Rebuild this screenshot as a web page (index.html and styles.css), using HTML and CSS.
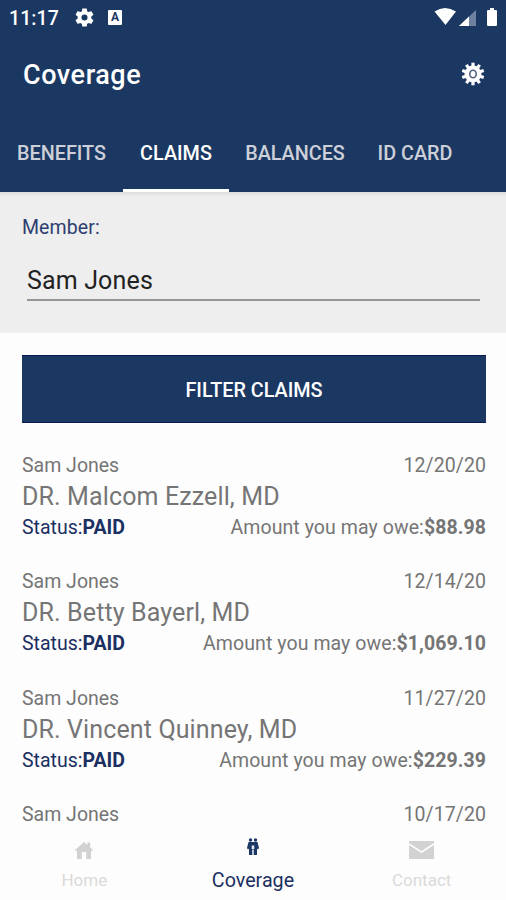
FILE: index.html
```html
<!DOCTYPE html>
<html lang="en">
<head>
<meta charset="utf-8">
<title>Coverage</title>
<link rel="stylesheet" href="styles.css">
</head>
<body>
<div class="app">
  <header class="header">
    <div class="statusbar">
      <span class="clock">11:17</span>
      <svg class="cog" width="19" height="19" viewBox="2 2 20 20"><path fill="#fff" d="M19.14 12.94c.04-.3.06-.61.06-.94 0-.32-.02-.64-.07-.94l2.03-1.58a.49.49 0 0 0 .12-.61l-1.92-3.32a.488.488 0 0 0-.59-.22l-2.39.96c-.5-.38-1.03-.7-1.62-.94l-.36-2.54a.484.484 0 0 0-.48-.41h-3.84c-.24 0-.43.17-.47.41l-.36 2.54c-.59.24-1.13.57-1.62.94l-2.39-.96a.48.48 0 0 0-.59.22L2.74 8.87c-.12.21-.08.47.12.61l2.03 1.58c-.05.3-.09.63-.09.94s.02.64.07.94l-2.03 1.58a.49.49 0 0 0-.12.61l1.92 3.32c.12.22.37.29.59.22l2.39-.96c.5.38 1.03.7 1.62.94l.36 2.54c.05.24.24.41.48.41h3.84c.24 0 .44-.17.47-.41l.36-2.54c.59-.24 1.13-.56 1.62-.94l2.39.96c.22.08.47 0 .59-.22l1.92-3.32a.49.49 0 0 0-.12-.61l-2.01-1.58zM12 15.2A3.2 3.2 0 1 1 12 8.800a3.200 3.200 0 0 1 0 6.400z"/></svg>
      <span class="badge">A</span>
      <svg class="signals" width="66" height="22" viewBox="0 0 66 22">
        <path fill="#fff" d="M0.500 4.500Q11-2.500 22 4.500L11.500 18z"/>
        <path fill="#70809f" d="M42 3v16H25z"/>
        <path fill="#fff" d="M35 9.600v9.400H25z"/>
        <path fill="#fff" d="M56 1h4v2h2q1 0 1 1v14q0 1-1 1h-8q-1 0-1-1V4q0-1 1-1h2z"/>
      </svg>
    </div>
    <div class="titlebar">
      <h1>Coverage</h1>
      <svg width="24" height="24" viewBox="-12 -12 24 24">
        <circle r="8.500" fill="#fff"/>
        <g stroke="#fff" stroke-width="3.200">
          <path d="M0-11.300V11.300"/><path d="M0-11.300V11.300" transform="rotate(36)"/><path d="M0-11.300V11.300" transform="rotate(72)"/><path d="M0-11.300V11.300" transform="rotate(108)"/><path d="M0-11.300V11.300" transform="rotate(144)"/>
        </g>
        <ellipse rx="3.200" ry="3.800" fill="#fff" stroke="#53627f" stroke-width="1.600"/>
      </svg>
    </div>
    <nav class="tabs">
      <a class="benefits">BENEFITS</a><a class="claims active">CLAIMS</a><a class="balances">BALANCES</a><a class="card">ID CARD</a>
    </nav>
  </header>
  <section class="member">
    <label>Member:</label>
    <div class="field">Sam Jones</div>
  </section>
  <main class="content">
    <button class="filter">FILTER CLAIMS</button>
    <article class="claim">
      <div class="row"><span>Sam Jones</span><span class="date">12/20/20</span></div>
      <h2>DR. Malcom Ezzell, MD</h2>
      <div class="row"><span class="status">Status:<b>PAID</b></span><span class="owe">Amount you may owe:<b>$88.98</b></span></div>
    </article>
    <article class="claim">
      <div class="row"><span>Sam Jones</span><span class="date">12/14/20</span></div>
      <h2>DR. Betty Bayerl, MD</h2>
      <div class="row"><span class="status">Status:<b>PAID</b></span><span class="owe">Amount you may owe:<b>$1,069.10</b></span></div>
    </article>
    <article class="claim">
      <div class="row"><span>Sam Jones</span><span class="date">11/27/20</span></div>
      <h2>DR. Vincent Quinney, MD</h2>
      <div class="row"><span class="status">Status:<b>PAID</b></span><span class="owe">Amount you may owe:<b>$229.39</b></span></div>
    </article>
    <article class="claim">
      <div class="row"><span>Sam Jones</span><span class="date">10/17/20</span></div>
    </article>
  </main>
  <footer class="bottomnav">
    <a><svg width="18" height="18" viewBox="0 0 18 18"><path fill="#d2d2d2" d="M9 1l3.500 3V1.500h2.700v5L18 9l-1 1.300-1-.8V18h-4.800v-7H6.800v7H2V9.500l-1 .8L0 9z"/></svg><span>Home</span></a>
    <a class="current"><svg width="12" height="18" viewBox="0 0 12 18"><g fill="#1b3865"><circle cx="3.500" cy="2" r="1.700"/><circle cx="8.500" cy="2" r="1.700"/><path d="M1.500 4H10.500L12 10l-1 1.500-1-1V17H6.700v-5.500H5.300V17H2v-6.500l-1 1L0 10z"/></g><path fill="#e6eaf2" d="M4.700 7.500h2.600v3.500H4.700z"/></svg><span>Coverage</span></a>
    <a><svg width="25" height="18" viewBox="0 0 25 18"><path fill="#d2d2d2" d="M0 0h25v2L12.500 10 0 2zM0 4l12.500 8L25 4v14H0z"/></svg><span>Contact</span></a>
  </footer>
</div>
</body>
</html>
```
FILE: styles.css
```css
* { box-sizing: border-box; }
body { margin: 0; background: #fdfdfd; font-family: Roboto, sans-serif; color: #757575; }
.app { width: 506px; height: 900px; overflow: hidden; display: flex; flex-direction: column; }
.header { height: 192px; flex: none; background: #1b3863; color: #fff; }
.statusbar { height: 36px; display: flex; align-items: center; padding: 0 6px 0 9px; }
.clock { width: 66px; font-size: 19.5px; font-weight: 500; letter-spacing: .1px; }
.cog { margin-top: -1px; }
.badge { width: 14px; height: 15px; margin: -1px 0 0 14px; border-radius: 1px; background: #fff; color: #1b3863; font-size: 12px; line-height: 15px; font-weight: 700; text-align: center; }
.signals { margin-left: auto; }
.titlebar { height: 78px; display: flex; align-items: center; justify-content: space-between; padding: 0 21px 2px 23px; }
h1 { margin: 2px 0 0; font-size: 27px; font-weight: 500; letter-spacing: .55px; }
.tabs { height: 78px; display: flex; font-size: 19.8px; font-weight: 500; color: #cdd0d8; text-align: center; }
.tabs a { height: 78px; line-height: 80px; }
.benefits { width: 123px; }
.claims { width: 106px; }
.balances { width: 132px; }
.card { width: 108px; }
.tabs .active { color: #fff; border-bottom: 3px solid #fff; }
.member { height: 141px; flex: none; background: linear-gradient(#dedede, #eee 5px); padding: 23px 26px 0 22px; }
label { display: block; font-size: 19.5px; line-height: 25px; letter-spacing: .1px; color: #2d3e70; }
.field { margin: 22px 0 0 5px; height: 39px; border-bottom: 2px solid #949494; font-size: 25px; line-height: 37px; letter-spacing: .15px; color: #222; }
.content { height: 497px; flex: none; padding: 22px 20px 0 22px; }
.filter { display: block; width: 464px; height: 68px; margin: 0 0 30px; padding: 2px 0 0; border: 0; border-top: 1px solid #071a53; border-bottom: 1px solid #071a53; background: #1b3863; color: #fff; font: 500 19.8px Roboto, sans-serif; }
.claim { height: 116.300px; width: 464px; font-size: 19.500px; }
.row { display: flex; justify-content: space-between; line-height: 26px; }
h2 { margin: 0; font-size: 25px; line-height: 36px; font-weight: 400; letter-spacing: .12px; }
.status { color: #1b2f62; }
.owe, .date { letter-spacing: .08px; }
.bottomnav { height: 70px; flex: none; display: grid; grid-template-columns: repeat(3, 1fr); font-size: 17px; color: #dadada; }
.bottomnav a { display: flex; flex-direction: column; align-items: center; padding-top: 11px; }
.bottomnav span { margin-top: 9px; line-height: 24px; }
.bottomnav .current { color: #1b2f62; font-size: 19.7px; padding-top: 8px; }
.bottomnav .current span { margin-top: 13px; }
```
